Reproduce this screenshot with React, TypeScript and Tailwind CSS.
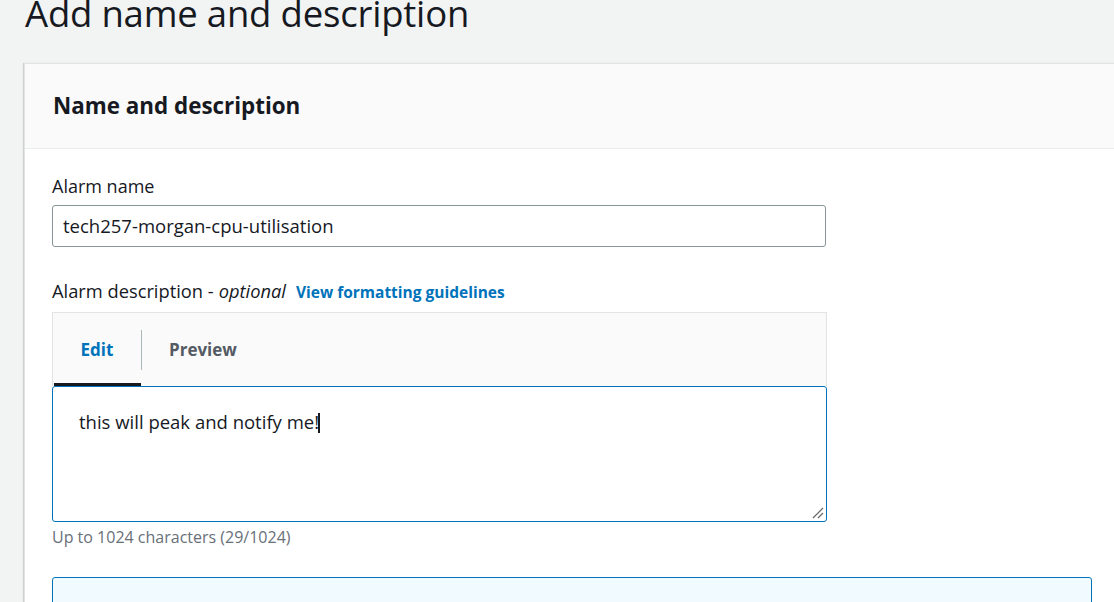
import React from 'react'

const FONT = '"Open Sans", "Noto Sans", Arial, sans-serif'

function ResizeGrip() {
  return (
    <svg width="12" height="12" viewBox="0 0 12 12" className="absolute bottom-[2px] right-[2px]">
      <path d="M1 11 L11 1" stroke="#6b6b6b" strokeWidth="1.2" />
      <path d="M6 11 L11 6" stroke="#6b6b6b" strokeWidth="1.2" />
    </svg>
  )
}

export default function App() {
  return (
    <div
      className="w-full h-[602px] overflow-hidden bg-[#f2f3f3] text-[#16191f]"
      style={{ fontFamily: FONT }}
    >
      <h1 className="ml-[25px] mt-[-9px] text-[36.5px] leading-[44px] font-normal tracking-[-0.2px]">
        Add name and description
      </h1>

      <div className="ml-[24px] mt-[28px] w-[1120px] bg-white border-l border-t border-[#e1e4e4] shadow-[-1px_0_1px_rgba(0,28,36,0.15)]">
        {/* header */}
        <div className="h-[85px] bg-[#fafafa] border-b border-[#eaeded] flex items-center pl-[28px]">
          <h2 className="text-[22.4px] font-bold leading-none">Name and description</h2>
        </div>

        {/* body */}
        <div className="pl-[27px] pt-[25px]">
          <div className="text-[18px] leading-[24px]">Alarm name</div>
          <div className="mt-[7px] w-[774px] h-[42px] border border-[#879596] rounded-[3px] flex items-center pl-[10px] text-[18.5px]">
            tech257-morgan-cpu-utilisation
          </div>

          <div className="mt-[32px] flex items-baseline text-[18.3px] leading-[24px]">
            <span>Alarm description - </span>
            <span className="italic ml-[5px]">optional</span>
            <span className="ml-[10px] text-[15.5px] font-bold text-[#0073bb]">View formatting guidelines</span>
          </div>

          <div className="mt-[8px] w-[775px]">
            {/* tabs */}
            <div className="h-[74px] bg-[#fafafa] border border-b-0 border-[#e1e4e4] flex items-stretch">
              <div className="relative w-[88px] flex items-center justify-center text-[17px] font-bold text-[#0073bb]">
                Edit
                <span className="absolute left-[1px] right-0 bottom-0 h-[3px] bg-[#16191f]" />
              </div>
              <div className="flex items-center">
                <span className="w-px h-[40px] bg-[#aab7b8]" />
              </div>
              <div className="flex items-center pl-[27px] text-[17px] font-bold text-[#545b64]">Preview</div>
            </div>

            {/* editor */}
            <div className="relative h-[136px] border border-[#0073bb] rounded-[3px] pl-[26px] pt-[22px] text-[18.5px] leading-[26px] bg-white">
              this will peak and notify me!
              <span className="inline-block align-middle w-[2px] h-[20px] bg-[#16191f] ml-[-1px] mt-[-3px]" />
              <ResizeGrip />
            </div>
          </div>

          <div className="mt-[4px] text-[16px] leading-[22px] text-[#687078]">Up to 1024 characters (29/1024)</div>

          <div className="mt-[29px] w-[1040px] h-[40px] bg-[#f1faff] border border-[#0073bb] rounded-[3px]" />
        </div>
      </div>
    </div>
  )
}
